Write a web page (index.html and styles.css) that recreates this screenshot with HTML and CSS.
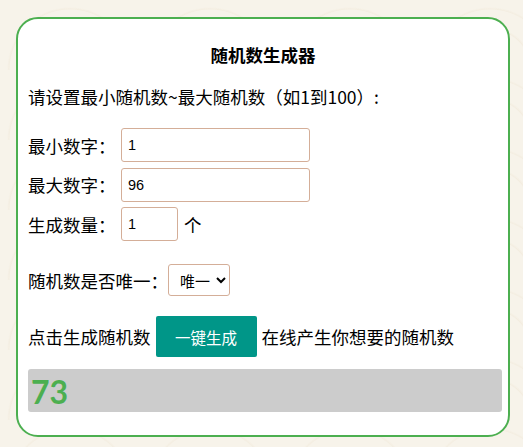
FILE: index.html
```html
<!DOCTYPE html>
<html lang="zh-CN">
<head>
<meta charset="utf-8">
<title>随机数生成器</title>
<link rel="stylesheet" href="styles.css">
</head>
<body>
<div class="card">
  <div class="title">随机数生成器</div>
  <div class="desc">请设置最小随机数~最大随机数（如1到100）:</div>
  <div class="rows">
    <div class="row"><span class="label">最小数字：</span><input class="inp" type="text" value="1"></div>
    <div class="row"><span class="label">最大数字：</span><input class="inp" type="text" value="96"></div>
    <div class="row"><span class="label">生成数量：</span><input class="inp small" type="text" value="1"><span class="unit">个</span></div>
  </div>
  <div class="row select-row"><span>随机数是否唯一：</span><select class="sel"><option>唯一</option><option>不唯一</option></select></div>
  <div class="row btn-row"><span>点击生成随机数</span><button class="btn">一键生成</button><span>在线产生你想要的随机数</span></div>
  <div class="result">73</div>
</div>
</body>
</html>
```
FILE: styles.css
```css
html, body {
  margin: 0;
  padding: 0;
}
body {
  width: 523px;
  height: 447px;
  overflow: hidden;
  background-color: #f7f3ea;
  background-image:
    radial-gradient(circle at 50% 100%, transparent 40px, rgba(238,228,210,0.4) 41px, transparent 43px, transparent 60px, rgba(238,228,210,0.35) 61px, transparent 63px);
  background-size: 140px 70px;
  font-family: "Noto Sans CJK SC", "Noto Sans", sans-serif;
  color: #000;
  padding-top: 17px;
  box-sizing: border-box;
}
.card {
  margin: 0 13px 0 16px;
  height: 420px;
  box-sizing: border-box;
  border: 2px solid #4caf50;
  border-radius: 22px;
  background: #fff;
  padding: 0 6px 0 10px;
  font-size: 17.5px;
}
.title {
  font-weight: bold;
  text-align: center;
  line-height: 24px;
  margin-top: 24px;
  padding-right: 4px;
}
.desc {
  line-height: 24px;
  margin-top: 18px;
}
.rows {
  display: flex;
  flex-direction: column;
  gap: 5.5px;
  margin-top: 19px;
}
.row {
  display: flex;
  align-items: center;
}
.label {
  width: 93px;
  flex: none;
}
.inp {
  box-sizing: border-box;
  width: 189px;
  height: 34px;
  border: 1px solid #d4ae98;
  border-radius: 3px;
  padding: 0 6px;
  font-family: "Liberation Sans", Arial, sans-serif;
  font-size: 14.5px;
  color: #000;
  outline: none;
  margin: 0;
}
.inp.small {
  width: 57px;
}
.unit {
  margin-left: 6px;
}
.select-row {
  margin-top: 23px;
  gap: 0;
}
.sel {
  box-sizing: border-box;
  width: 62px;
  height: 32px;
  border: 1px solid #d4ae98;
  border-radius: 3px;
  background: #fff;
  font-family: "Noto Sans CJK SC", sans-serif;
  font-size: 15px;
  color: #000;
  padding: 0 0 0 7px;
  margin: 0;
}
.btn-row {
  margin-top: 20px;
  gap: 5px;
}
.btn {
  box-sizing: border-box;
  width: 101px;
  height: 41px;
  border: none;
  border-radius: 2px;
  background: #009688;
  color: #fff;
  font-family: "Noto Sans CJK SC", sans-serif;
  font-size: 15.5px;
  padding: 0;
  margin: 0;
}
.result {
  margin-top: 12px;
  height: 43px;
  background: #cccccc;
  border-radius: 3px;
  color: #4caf50;
  font-weight: bold;
  font-size: 32px;
  line-height: 45px;
  padding-left: 3px;
  font-family: "Lato", "Noto Sans", sans-serif;
}
```
